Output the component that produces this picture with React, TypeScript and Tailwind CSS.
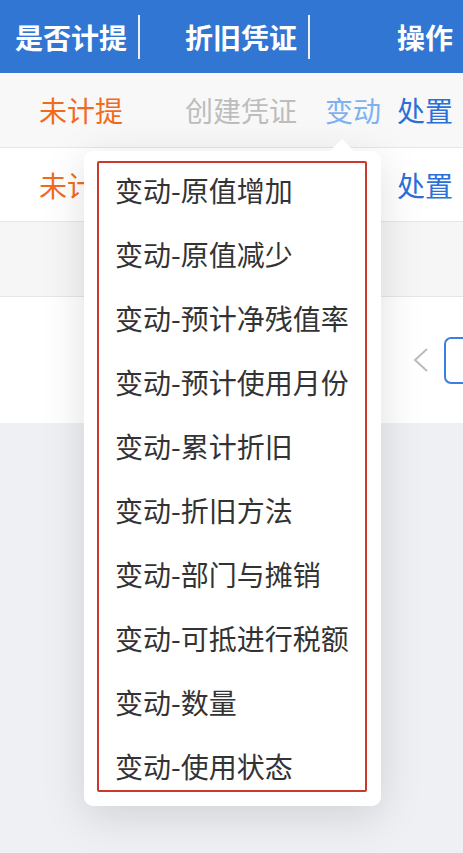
import React from 'react';

const items = [
  '变动-原值增加',
  '变动-原值减少',
  '变动-预计净残值率',
  '变动-预计使用月份',
  '变动-累计折旧',
  '变动-折旧方法',
  '变动-部门与摊销',
  '变动-可抵进行税额',
  '变动-数量',
  '变动-使用状态',
];

const App = () => {
  return <div className="relative w-[463px] h-[853px] overflow-hidden bg-[#eef0f4] text-[28px] leading-none" style={{
    fontFamily: '"Noto Sans CJK SC", "Noto Sans", sans-serif'
  }}>
      {/* header */}
      <div className="flex items-center h-[73px] bg-[#3176d3] text-white font-bold">
        <span className="ml-[15px] w-[113px] whitespace-nowrap">是否计提</span>
        <span className="ml-[10px] w-[2px] h-[44px] bg-white/90" />
        <span className="ml-[45px] w-[113px] whitespace-nowrap">折旧凭证</span>
        <span className="ml-[10px] w-[2px] h-[44px] bg-white/90" />
        <span className="ml-[87px] whitespace-nowrap">操作</span>
      </div>

      {/* rows */}
      <div className="flex items-center h-[75px] bg-[#f8f8f8] border-b border-[#e6e6e6]">
        <span className="ml-[39px] w-[146px] text-[#f26b1d]">未计提</span>
        <span className="w-[140px] text-[#bdbdbd] whitespace-nowrap">创建凭证</span>
        <span className="w-[72px] text-[#7db1ef]">变动</span>
        <span className="text-[#2b70d8]">处置</span>
      </div>
      <div className="flex items-center h-[74px] bg-white border-b border-[#e6e6e6]">
        <span className="ml-[39px] w-[358px] text-[#f26b1d]">未计提</span>
        <span className="text-[#2b70d8]">处置</span>
      </div>
      <div className="h-[75px] bg-[#f6f6f6] border-b border-[#e6e6e6]" />

      {/* pagination */}
      <div className="flex items-center justify-end h-[126px] bg-white">
        <svg width="18" height="26" viewBox="0 0 18 26" className="mr-[14px]">
          <path d="M15 2 L3 13 L15 24" fill="none" stroke="#bcbcbc" strokeWidth="2" />
        </svg>
        <div className="w-[19px] h-[47px] border-2 border-r-0 border-[#3a80e0] rounded-l-[7px]" />
      </div>

      {/* dropdown */}
      <div className="absolute left-[84px] top-[151px] w-[297px] h-[655px] bg-white rounded-[9px] shadow-[0_10px_44px_rgba(0,0,0,0.13)] pt-[7px]">
        <div className="absolute left-[246px] -top-[12px] w-0 h-0 border-l-[12px] border-r-[12px] border-b-[12px] border-l-transparent border-r-transparent border-b-white" />
        {items.map(item => <div key={item} className="flex items-center h-[64px] pl-[31px] text-[#333333] whitespace-nowrap">
            {item}
          </div>)}
        <div className="absolute left-[13px] top-[10px] w-[270px] h-[631px] border-2 border-[#c93a2e] rounded-[2px] pointer-events-none" />
      </div>
    </div>;
};

export default App;
